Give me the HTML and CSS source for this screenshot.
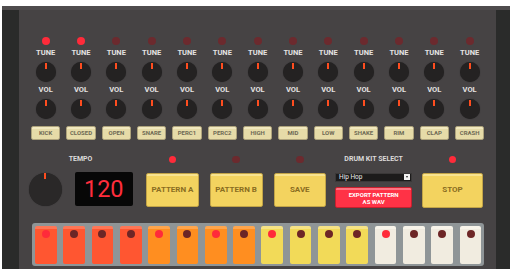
FILE: index.html
```html
<!DOCTYPE html>
<html lang="en">
<head>
	<meta charset="UTF-8">
	<title>Drum Machine</title>
	<link rel="stylesheet" href="styles.css">
</head>
<body>
	<div class="frame">
		<div class="panel">
			<div class="channels">
				<div class="channel"><div class="led on"></div><div class="label">TUNE</div><div class="knob"></div><div class="label">VOL</div><div class="knob"></div><div class="voice">KICK</div></div>
				<div class="channel"><div class="led on"></div><div class="label">TUNE</div><div class="knob"></div><div class="label">VOL</div><div class="knob"></div><div class="voice">CLOSED</div></div>
				<div class="channel"><div class="led"></div><div class="label">TUNE</div><div class="knob"></div><div class="label">VOL</div><div class="knob"></div><div class="voice">OPEN</div></div>
				<div class="channel"><div class="led"></div><div class="label">TUNE</div><div class="knob"></div><div class="label">VOL</div><div class="knob"></div><div class="voice">SNARE</div></div>
				<div class="channel"><div class="led"></div><div class="label">TUNE</div><div class="knob"></div><div class="label">VOL</div><div class="knob"></div><div class="voice">PERC1</div></div>
				<div class="channel"><div class="led"></div><div class="label">TUNE</div><div class="knob"></div><div class="label">VOL</div><div class="knob"></div><div class="voice">PERC2</div></div>
				<div class="channel"><div class="led"></div><div class="label">TUNE</div><div class="knob"></div><div class="label">VOL</div><div class="knob"></div><div class="voice">HIGH</div></div>
				<div class="channel"><div class="led"></div><div class="label">TUNE</div><div class="knob"></div><div class="label">VOL</div><div class="knob"></div><div class="voice">MID</div></div>
				<div class="channel"><div class="led"></div><div class="label">TUNE</div><div class="knob"></div><div class="label">VOL</div><div class="knob"></div><div class="voice">LOW</div></div>
				<div class="channel"><div class="led"></div><div class="label">TUNE</div><div class="knob"></div><div class="label">VOL</div><div class="knob"></div><div class="voice">SHAKE</div></div>
				<div class="channel"><div class="led"></div><div class="label">TUNE</div><div class="knob"></div><div class="label">VOL</div><div class="knob"></div><div class="voice">RIM</div></div>
				<div class="channel"><div class="led"></div><div class="label">TUNE</div><div class="knob"></div><div class="label">VOL</div><div class="knob"></div><div class="voice">CLAP</div></div>
				<div class="channel"><div class="led"></div><div class="label">TUNE</div><div class="knob"></div><div class="label">VOL</div><div class="knob"></div><div class="voice">CRASH</div></div>
			</div>
			<div class="deck">
				<div class="group tempo">
					<div class="head"><span class="label">TEMPO</span></div>
					<div class="tempo-row">
						<div class="knob big"></div>
						<div class="display">120</div>
					</div>
				</div>
				<div class="group pat-a">
					<div class="head"><div class="led small on"></div></div>
					<div class="btn">PATTERN A</div>
				</div>
				<div class="group pat-b">
					<div class="head"><div class="led small"></div></div>
					<div class="btn">PATTERN B</div>
				</div>
				<div class="group save">
					<div class="head"><div class="led small"></div></div>
					<div class="btn">SAVE</div>
				</div>
				<div class="group kit">
					<div class="head"><span class="label">DRUM KIT SELECT</span></div>
					<div class="select"><span>Hip Hop</span><span class="arrow"></span></div>
					<div class="export">EXPORT PATTERN<br>AS WAV</div>
				</div>
				<div class="group stop">
					<div class="head"><div class="led small on"></div></div>
					<div class="btn">STOP</div>
				</div>
			</div>
			<div class="steps">
				<div class="step red"><i class="dot on"></i></div>
				<div class="step red"><i class="dot"></i></div>
				<div class="step red"><i class="dot"></i></div>
				<div class="step red"><i class="dot"></i></div>
				<div class="step orange"><i class="dot on"></i></div>
				<div class="step orange"><i class="dot"></i></div>
				<div class="step orange"><i class="dot on"></i></div>
				<div class="step orange"><i class="dot"></i></div>
				<div class="step yellow"><i class="dot on"></i></div>
				<div class="step yellow"><i class="dot"></i></div>
				<div class="step yellow"><i class="dot"></i></div>
				<div class="step yellow"><i class="dot"></i></div>
				<div class="step white"><i class="dot on"></i></div>
				<div class="step white"><i class="dot"></i></div>
				<div class="step white"><i class="dot"></i></div>
				<div class="step white"><i class="dot"></i></div>
			</div>
		</div>
	</div>
</body>
</html>
```

FILE: styles.css
```css
*{margin: 0;padding: 0;box-sizing: border-box;}
html, body{width: 100%; height: 100%; overflow: hidden; background: #fff;}
body{font-family: Roboto, "Liberation Sans", sans-serif;}

.frame{margin: 6px 2px 0 2px; height: 263px; background: #2a2b2a; border-top: 4px solid #4f4c4d; padding: 0 14px 0 17px;}
.panel{height: 259px; background: #464344; padding: 27px 8px 0 9px;}

.channels{display: grid; grid-template-columns: repeat(13, 35.33px);}
.channel{display: flex; flex-direction: column; align-items: center;}

.led{width: 8px; height: 8px; border-radius: 50%; background: #6c2a2e;}
.led.on{background: #ff2b3a;}
.led.small{width: 7.5px; height: 7.5px;}

.label{font-size: 7.5px; line-height: 8px; font-weight: bold; color: #e4e2e2; margin-top: 4px;}
.channel .label + .knob{margin-top: 4.7px;}
.channel .knob + .label{margin-top: 4.3px;}

.knob{position: relative; width: 20px; height: 20px; border-radius: 50%; background: #242222; box-shadow: 0 0 1px rgba(0,0,0,.5);}
.knob::after{content: ""; position: absolute; left: 9px; top: 1.5px; width: 2px; height: 6px; background: #ff4d1f;}
.knob.big{width: 33px; height: 33px; background: #2a2828;}
.knob.big::after{left: 15.5px; top: 0; height: 6px;}

.voice{margin-top: 7.4px; width: 29.5px; height: 14px; border: 1px solid #aea37c; border-radius: 2px;
	background: linear-gradient(#f1e8bf 0, #f1e8bf 2px, #e6dba8 2px);
	font-size: 6px; line-height: 12px; font-weight: bold; color: #6e6a55; text-align: center;}

.deck{display: flex; margin-top: 15.3px; padding-left: 0.5px;}
.group{display: flex; flex-direction: column; align-items: center;}
.head{height: 8px; margin-bottom: 9.3px; display: flex; align-items: center; justify-content: center;}
.head .label{margin-top: 0; font-size: 7px; color: #dcdada;}

.tempo{width: 104px;}
.tempo-row{display: flex; gap: 13.5px; align-items: flex-start; width: 100%;}
.display{width: 57.5px; height: 34.3px; margin-top: -0.6px; background: #070707; border-radius: 2px; color: #ff2d3c; font-size: 23.5px; line-height: 34px; text-align: center;}

.btn{height: 34.5px; border: 1px solid #c2a447; border-radius: 2px;
	background: linear-gradient(#f8e38f 0, #f8e38f 2px, #f3d35f 2px);
	font-size: 8px; font-weight: bold; color: #8a6d22; text-align: center; line-height: 32px; width: 100%;}
.pat-a{width: 53px; margin-left: 13.5px;}
.pat-b{width: 53px; margin-left: 10.5px;}
.save{width: 52.5px; margin-left: 11px;}
.kit{width: 77.3px; margin-left: 9px;}
.stop{width: 61.6px; margin-left: 9.4px;}
.stop .btn{height: 35px;}

.select{width: 100%; height: 9px; background: #1c1b1b; border: 1px solid #3a3838; display: flex; align-items: center; justify-content: space-between; padding: 0 1px 0 3px;
	font-size: 6.5px; color: #ececec;}
.select .arrow{position: relative; width: 6px; height: 6px; background: #f2f2f2;}
.select .arrow::after{content: ""; position: absolute; left: 1.5px; top: 2px; border: 1.5px solid transparent; border-top: 2px solid #222;}
.export{margin-top: 5.7px; width: 100%; height: 21px; border: 1px solid #c8202e; border-radius: 2px;
	background: linear-gradient(#ff7482 0, #ff7482 2px, #ff3246 2px);
	font-size: 6px; line-height: 7px; font-weight: bold; color: #fff; text-align: center; padding-top: 2.5px;}

.steps{margin: 15px 0 0 3.7px; width: 452.3px; height: 42.5px; background: #8f9597; border-radius: 3px;
	padding: 2.7px 2.3px 2px 3.3px; display: grid; grid-template-columns: repeat(16, 21.7px); column-gap: 6.63px;}
.step{height: 37.6px; border-radius: 2px; display: flex; justify-content: center; padding-top: 3.7px;}
.step.red{background: linear-gradient(#ff7656 0, #ff7656 3px, #ff5631 3px);}
.step.orange{background: linear-gradient(#ffa54c 0, #ffa54c 3px, #ff8e20 3px);}
.step.yellow{background: linear-gradient(#f6e385 0, #f6e385 3px, #f2da58 3px);}
.step.white{background: linear-gradient(#f8f4ea 0, #f8f4ea 3px, #f1ece0 3px);}
.dot{display: block; width: 8px; height: 8px; border-radius: 50%; background: #6d2626;}
.dot.on{background: #ff2b3a;}
```
